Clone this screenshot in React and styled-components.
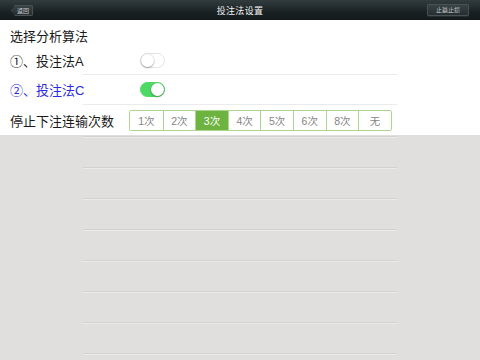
import React, { useState } from "react";
import styled, { createGlobalStyle } from "styled-components";

const Global = createGlobalStyle`
  html, body { margin: 0; padding: 0; }
  body { font-family: "Liberation Sans", "Noto Sans CJK SC", sans-serif; }
`;

const Page = styled.div`
  width: 480px;
  height: 360px;
  overflow: hidden;
  background: #e0dfde;
  display: flex;
  flex-direction: column;
`;

const NavBar = styled.div`
  height: 20px;
  flex: none;
  background: linear-gradient(#323c3f, #1a2123 60%, #131a1c);
  display: grid;
  grid-template-columns: 1fr auto 1fr;
  align-items: center;
  padding: 0 11px;
  box-sizing: border-box;
`;

const NavTitle = styled.div`
  color: #f2f2f2;
  font-size: 9px;
  font-family: "Noto Sans CJK SC", sans-serif;
  letter-spacing: 0.3px;
`;

const NavButton = styled.div`
  justify-self: ${(p) => (p.$right ? "end" : "start")};
  height: ${(p) => (p.$right ? 12 : 11)}px;
  margin-top: ${(p) => (p.$right ? -1 : 1)}px;
  padding: ${(p) => (p.$right ? "0 9px" : "0 4px 0 6px")};
  display: flex;
  align-items: center;
  font-size: 6px;
  font-family: "Noto Sans CJK SC", sans-serif;
  color: #c8cbcc;
  background: linear-gradient(#3b4548, #232b2e);
  border-radius: 2px;
  box-shadow: inset 0 0 0 1px #485255, 0 1px 0 rgba(255, 255, 255, 0.08);
  clip-path: ${(p) =>
    p.$right ? "none" : "polygon(4px 0, 100% 0, 100% 100%, 4px 100%, 0 50%)"};
`;

const WhitePanel = styled.div`
  background: #ffffff;
  display: flex;
  flex-direction: column;
  flex: none;
`;

const SectionTitle = styled.div`
  margin-top: 7px;
  height: 20px;
  line-height: 20px;
  padding-left: 10px;
  font-size: 13px;
  color: #1a1a1a;
`;

const Row = styled.div`
  height: ${(p) => p.$h}px;
  display: flex;
  align-items: center;
  padding-left: 10px;
`;

const Label = styled.div`
  width: ${(p) => p.$w || 130}px;
  flex: none;
  font-size: 13px;
  color: ${(p) => (p.$blue ? "#2a2ae0" : "#1a1a1a")};
`;

const Divider = styled.div`
  height: 1px;
  margin: 0 83px;
  background: ${(p) => (p.$dark ? "#d3d2d1" : "#ebebeb")};
  box-shadow: ${(p) => (p.$dark ? "0 1px 0 rgba(255,255,255,0.35)" : "none")};
`;

const SwitchTrack = styled.div`
  width: 25px;
  height: 15px;
  box-sizing: border-box;
  border-radius: 8px;
  border: 1px solid ${(p) => (p.$on ? "#4cd964" : "#e3e3e3")};
  background: ${(p) => (p.$on ? "#4cd964" : "#ffffff")};
  display: flex;
  justify-content: ${(p) => (p.$on ? "flex-end" : "flex-start")};
  align-items: center;
  padding: 0;
`;

const Knob = styled.div`
  width: 13px;
  height: 13px;
  border-radius: 50%;
  background: #ffffff;
  box-shadow: 0 1px 2px rgba(0, 0, 0, 0.3), 0 0 0 0.5px rgba(0, 0, 0, 0.08);
`;

const Segmented = styled.div`
  display: flex;
  height: 21px;
  border: 1px solid #acd68f;
  border-radius: 2px;
  box-sizing: border-box;
  overflow: hidden;
`;

const Segment = styled.div`
  width: 32.6px;
  display: flex;
  align-items: center;
  justify-content: center;
  font-size: 10.5px;
  color: ${(p) => (p.$active ? "#ffffff" : "#858585")};
  background: ${(p) => (p.$active ? "#6cb43f" : "#ffffff")};
  border-left: ${(p) => (p.$first ? "none" : "1px solid #acd68f")};
  box-sizing: border-box;
`;

const GrayArea = styled.div`
  display: flex;
  flex-direction: column;
  flex: 1;
  padding-top: 1px;
`;

const GrayRow = styled.div`
  height: 30px;
`;

const Switch = ({ on }) => (
  <SwitchTrack $on={on}>
    <Knob />
  </SwitchTrack>
);

const options = ["1次", "2次", "3次", "4次", "5次", "6次", "8次", "无"];

export default function App() {
  const [active] = useState(2);
  return (
    <>
      <Global />
      <Page>
        <NavBar>
          <NavButton>返回</NavButton>
          <NavTitle>投注法设置</NavTitle>
          <NavButton $right>止赢止损</NavButton>
        </NavBar>
        <WhitePanel>
          <SectionTitle>选择分析算法</SectionTitle>
          <Row $h={27}>
            <Label>①、投注法A</Label>
            <Switch on={false} />
          </Row>
          <Divider />
          <Row $h={29}>
            <Label $blue>②、投注法C</Label>
            <Switch on={true} />
          </Row>
          <Divider />
          <Row $h={30}>
            <Label $w={119}>停止下注连输次数</Label>
            <Segmented>
              {options.map((o, i) => (
                <Segment key={o} $first={i === 0} $active={i === active}>
                  {o}
                </Segment>
              ))}
            </Segmented>
          </Row>
        </WhitePanel>
        <GrayArea>
          <Divider $dark />
          {Array.from({ length: 8 }).map((_, i) => (
            <React.Fragment key={i}>
              <GrayRow />
              <Divider $dark />
            </React.Fragment>
          ))}
        </GrayArea>
      </Page>
    </>
  );
}
